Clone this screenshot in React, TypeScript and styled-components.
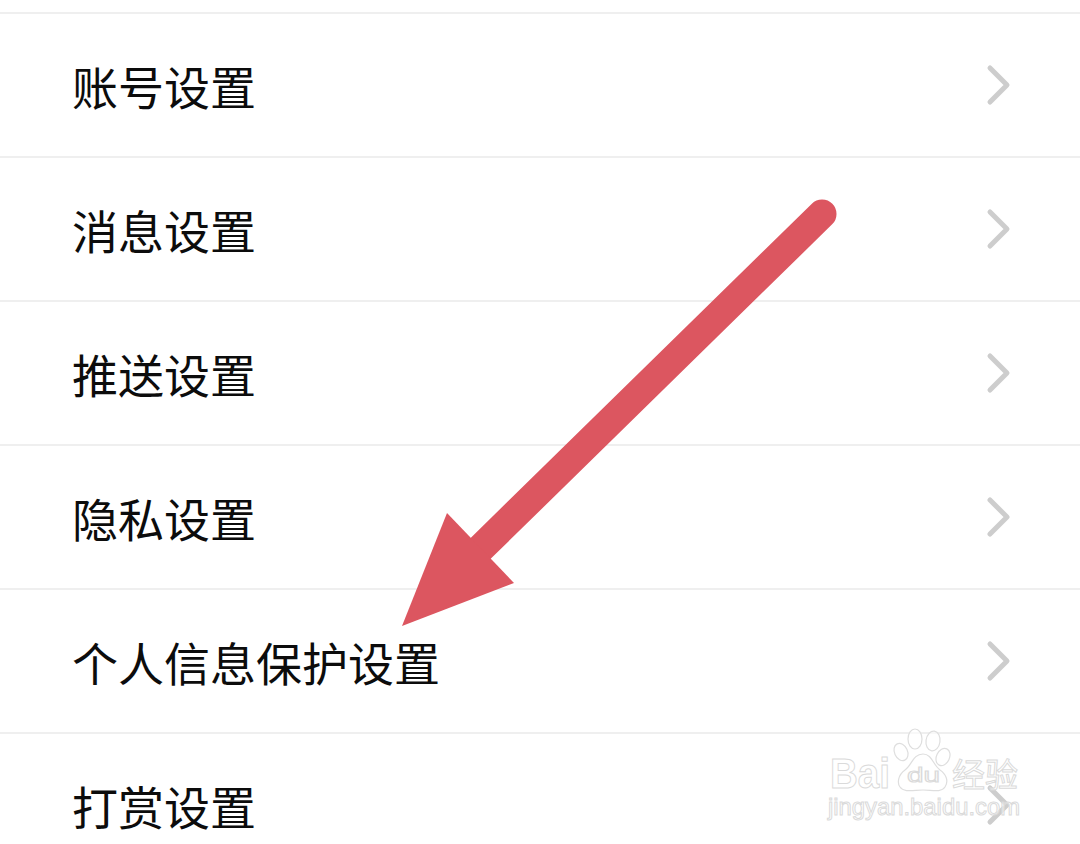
import styled, { createGlobalStyle } from "styled-components";

const GlobalStyle = createGlobalStyle`
  html, body {
    margin: 0;
    padding: 0;
    background: #fff;
  }
  body {
    overflow: hidden;
  }
`;

const Page = styled.div`
  position: relative;
  width: 1080px;
  height: 844px;
  overflow: hidden;
  background: #fff;
  padding-top: 12px;
  box-sizing: border-box;
`;

const SettingsList = styled.div`
  display: flex;
  flex-flow: column;
`;

const SettingsRow = styled.div`
  height: 144px;
  box-sizing: border-box;
  flex-shrink: 0;
  border-top: 2px solid #efefef;
  display: flex;
  align-items: center;
  justify-content: space-between;
  padding: 0 68px 0 72px;
`;

const RowLabel = styled.span`
  font-family: "Noto Sans CJK SC", "Noto Sans", sans-serif;
  font-size: 46px;
  font-weight: 400;
  color: #0c0c0c;
  line-height: 1;
`;

const ChevronIcon = styled.svg`
  width: 26px;
  height: 42px;
  display: block;
`;

const ArrowOverlay = styled.svg`
  position: absolute;
  left: 0;
  top: 0;
  width: 1080px;
  height: 844px;
  pointer-events: none;
`;

const Watermark = styled.svg`
  position: absolute;
  left: 820px;
  top: 728px;
  width: 210px;
  height: 100px;
  pointer-events: none;
`;

const rows = [
  "账号设置",
  "消息设置",
  "推送设置",
  "隐私设置",
  "个人信息保护设置",
  "打赏设置",
];

const App = () => {
  return (
    <Page>
      <GlobalStyle />
      <SettingsList>
        {rows.map((label) => (
          <SettingsRow key={label}>
            <RowLabel>{label}</RowLabel>
            <ChevronIcon viewBox="0 0 26 42">
              <path
                d="M4 4 L21 21 L4 38"
                fill="none"
                stroke="#cdcdcd"
                strokeWidth="5"
                strokeLinecap="round"
                strokeLinejoin="round"
              />
            </ChevronIcon>
          </SettingsRow>
        ))}
      </SettingsList>

      <ArrowOverlay viewBox="0 0 1080 844">
        <line
          x1="822"
          y1="214"
          x2="480"
          y2="549"
          stroke="#dc5660"
          strokeWidth="29"
          strokeLinecap="round"
        />
        <polygon points="402,626 447,513 514,583" fill="#dc5660" />
      </ArrowOverlay>

      <Watermark viewBox="0 0 210 100">
        <g fill="#fff" fillOpacity="0.55" stroke="#dedede" strokeWidth="1.2">
          <ellipse cx="95" cy="11" rx="7" ry="10" />
          <ellipse cx="113" cy="13" rx="7" ry="10" transform="rotate(8 113 13)" />
          <ellipse cx="81" cy="24" rx="6.5" ry="9" transform="rotate(-25 81 24)" />
          <ellipse cx="123" cy="29" rx="6.5" ry="9" transform="rotate(25 123 29)" />
          <path d="M103 26 C93 26 92 37 85 42 C78 47 77 55 80 59 C84 65 94 62 103 62 C112 62 121 65 125 59 C129 53 126 46 120 42 C113 37 112 26 103 26 Z" />
        </g>
        <g
          fill="#fff"
          fillOpacity="0.6"
          stroke="#dadada"
          strokeWidth="1"
          fontFamily="'Liberation Sans', sans-serif"
        >
          <text x="10" y="60" fontSize="42" fontWeight="700" textLength="60" lengthAdjust="spacingAndGlyphs">Bai</text>
          <text x="87" y="54" fontSize="20" textLength="33" lengthAdjust="spacingAndGlyphs">du</text>
          <text x="132" y="59" fontSize="33" textLength="66" fontFamily="'Noto Sans CJK SC', sans-serif">经验</text>
          <text x="8" y="87" fontSize="24" textLength="192" lengthAdjust="spacingAndGlyphs">jingyan.baidu.com</text>
        </g>
      </Watermark>
    </Page>
  );
};

export default App;
